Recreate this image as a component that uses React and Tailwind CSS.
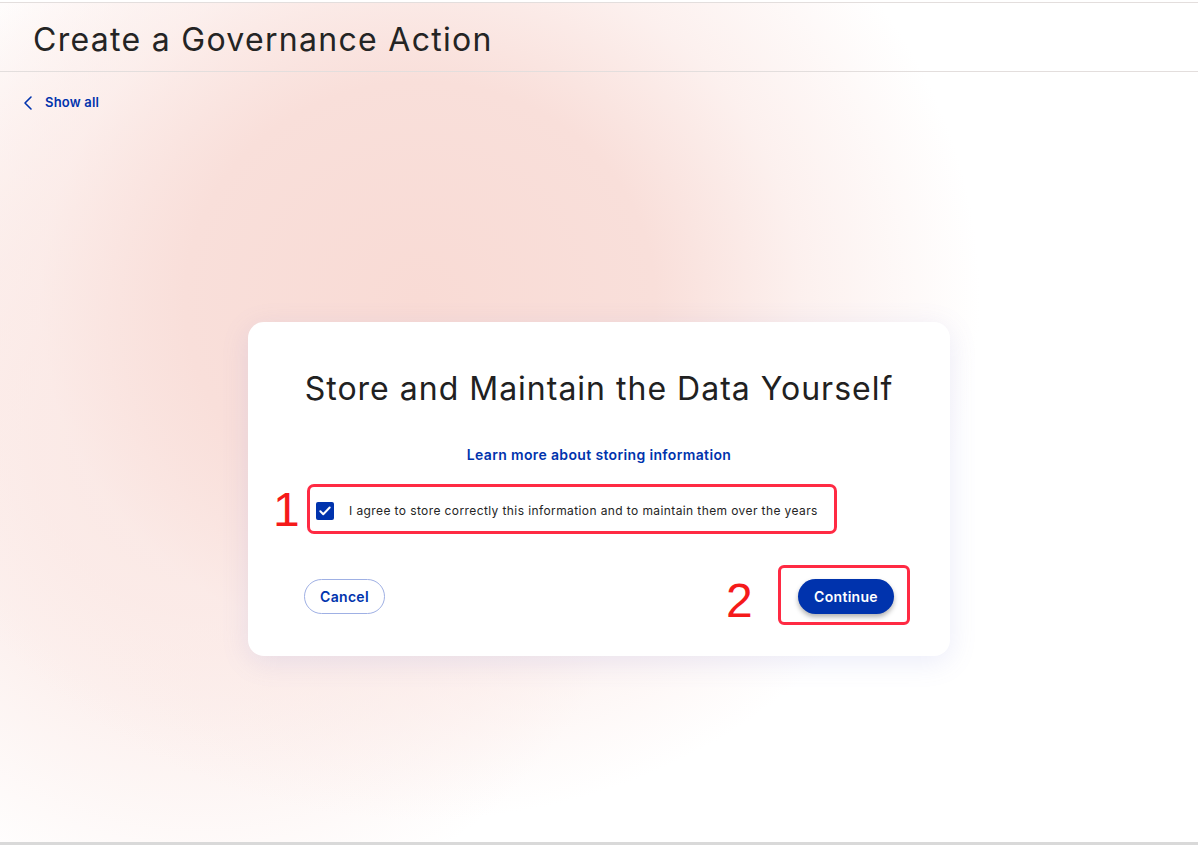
import React from "react";
import { ChevronLeft } from "lucide-react";

export default function App() {
  return (
    <div className="relative w-[1198px] h-[845px] overflow-hidden bg-white font-['Inter',sans-serif]">
      <div className="absolute inset-0 bg-[radial-gradient(ellipse_560px_520px_at_420px_300px,#f9dbd5_0%,#f9dfda_42%,rgba(251,234,231,0.7)_68%,rgba(255,255,255,0)_100%),radial-gradient(ellipse_460px_480px_at_200px_440px,rgba(249,224,219,0.9)_0%,rgba(250,230,226,0.6)_55%,rgba(255,255,255,0)_100%)]" />
      <div className="relative flex flex-col h-full">
        <div className="h-[2px] bg-white" />
        <header className="h-[70px] border-t border-b border-[#e3dedd] flex items-center px-[33px]">
          <h1 className="text-[32px] leading-none text-[#242424] tracking-[1.3px] pt-[5px]">
            Create a Governance Action
          </h1>
        </header>
        <div className="pl-[16px] pt-[19px] flex items-center text-[#0033ad]">
          <ChevronLeft size={24} strokeWidth={1.6} />
          <span className="ml-[5px] text-[13px] font-semibold tracking-[0.2px]">Show all</span>
        </div>
        <div className="flex justify-center pt-[207px]">
          <div className="w-[702px] h-[334px] bg-white rounded-[16px] shadow-[0_6px_28px_rgba(110,120,210,0.14)] px-[56px] pt-[49px] flex flex-col">
            <h2 className="text-center text-[32px] leading-[36px] text-[#212121] tracking-[1px]">
              Store and Maintain the Data Yourself
            </h2>
            <a className="self-center mt-[38px] text-[14px] font-semibold text-[#0033ad] leading-[20px] tracking-[0.35px]">
              Learn more about storing information
            </a>
            <div className="relative mt-[36px] flex items-center h-[20px] pl-[12px]">
              <div className="absolute left-[3px] top-[-17px] w-[530px] h-[50px] border-[3px] border-[#ff2a43] rounded-[7px]" />
              <span className="absolute left-[-31px] top-[-15px] text-[48px] leading-none text-[#f51a1a] font-['Liberation_Sans',sans-serif]">
                1
              </span>
              <div className="w-[18px] h-[18px] rounded-[2px] bg-[#0033ad] flex items-center justify-center">
                <svg width="14" height="14" viewBox="0 0 24 24" fill="none" stroke="white" strokeWidth="3.4" strokeLinecap="round" strokeLinejoin="round">
                  <path d="M4 12.5l5 5L20 6" />
                </svg>
              </div>
              <span className="ml-[15px] text-[12px] text-[#242424] tracking-[0.4px]">
                I agree to store correctly this information and to maintain them over the years
              </span>
            </div>
            <div className="mt-[58px] flex items-center justify-between">
              <button className="h-[35px] w-[81px] rounded-full border border-[#9fb0e4] text-[#0033ad] text-[14px] font-semibold bg-white tracking-[0.3px]">
                Cancel
              </button>
              <div className="relative">
                <span className="absolute left-[-72px] top-[-2px] text-[48px] leading-none text-[#f51a1a] font-['Liberation_Sans',sans-serif]">
                  2
                </span>
                <div className="absolute left-[-20px] top-[-14px] w-[132px] h-[60px] border-[3px] border-[#ff2a43] rounded-[6px]" />
                <button className="h-[35px] w-[96px] rounded-full bg-[#0033ad] text-white text-[14px] font-semibold tracking-[0.3px] shadow-[0_3px_5px_rgba(0,0,0,0.3)]">
                  Continue
                </button>
              </div>
            </div>
          </div>
        </div>
      </div>
      <div className="absolute left-0 right-0 bottom-0 h-[3px] bg-[#d9d9d9]" />
    </div>
  );
}
